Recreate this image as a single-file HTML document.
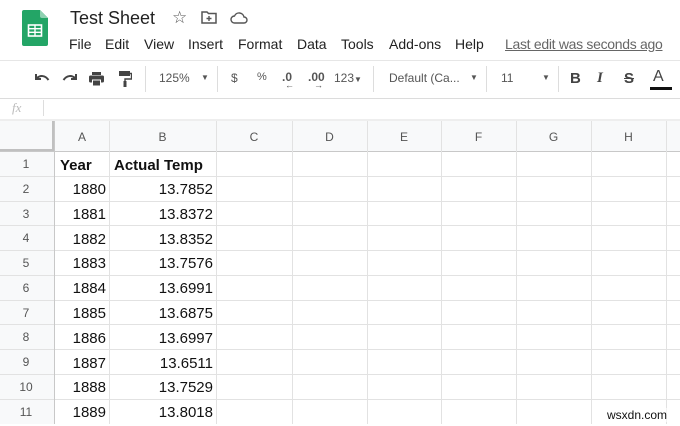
<!DOCTYPE html>
<html><head><style>
*{margin:0;padding:0;box-sizing:border-box}
body{width:680px;height:424px;overflow:hidden;background:#fff;font-family:"Liberation Sans",Arial,sans-serif;position:relative;color:#222}
.a{position:absolute;white-space:nowrap}
.m{position:absolute;top:36px;font-size:14px;color:#222}
.t{color:#555;font-size:12px}
.hl{position:absolute;left:0;width:680px;height:1px;background:#e2e2e2}
.vl{position:absolute;top:121px;height:303px;width:1px;background:#e2e2e2}
.ch{position:absolute;top:130px;font-size:12px;color:#555;text-align:center}
.rn{position:absolute;left:0;width:52px;text-align:center;font-size:12px;color:#555}
.c{position:absolute;font-size:15px;color:#111}
</style></head><body>
<svg class="a" style="left:22px;top:10px" width="26" height="36" viewBox="0 0 26 36"><path d="M2 0H18L26 8V34a2 2 0 0 1-2 2H2a2 2 0 0 1-2-2V2a2 2 0 0 1 2-2z" fill="#23a566"/><path d="M18 0L26 8H20a2 2 0 0 1-2-2z" fill="#8ed1b1"/><rect x="6.5" y="15" width="13" height="11" fill="none" stroke="#fff" stroke-width="1.6"/><path d="M6.5 18.7H19.5M6.5 22.3H19.5M13 15V26" stroke="#fff" stroke-width="1.4"/></svg>
<div class="a" style="left:70px;top:8px;font-size:18px;color:#222">Test Sheet</div>
<div class="a" style="left:172px;top:8px;font-size:17px;color:#555">☆</div>
<svg class="a" style="left:201px;top:11px" width="16" height="13" viewBox="0 0 16 13"><path d="M1 1H6L7.5 2.5H15V12H1Z" fill="none" stroke="#555" stroke-width="1.5"/><path d="M8 5V10M5.5 7.5H10.5" stroke="#555" stroke-width="1.4"/></svg>
<svg class="a" style="left:230px;top:12px" width="18" height="12" viewBox="0 0 18 12"><path d="M4.5 11H14a3 3 0 0 0 0-6 5 5 0 0 0-9.5-1A3.5 3.5 0 0 0 4.5 11Z" fill="none" stroke="#555" stroke-width="1.4"/></svg>
<div class="m" style="left:69px">File</div><div class="m" style="left:105px">Edit</div><div class="m" style="left:144px">View</div><div class="m" style="left:188px">Insert</div><div class="m" style="left:238px">Format</div><div class="m" style="left:297px">Data</div><div class="m" style="left:341px">Tools</div><div class="m" style="left:389px">Add-ons</div><div class="m" style="left:455px">Help</div>
<div class="a" style="left:505px;top:36px;font-size:14px;color:#666;text-decoration:underline;letter-spacing:-0.3px">Last edit was seconds ago</div>
<div class="hl" style="top:60px;background:#e6e6e6"></div>
<svg class="a" style="left:34px;top:73px" width="16" height="10" viewBox="0 0 16 10"><path d="M2 1V6H7" fill="none" stroke="#444" stroke-width="2"/><path d="M2.5 5.5C6 2 11 2 14.5 7" fill="none" stroke="#444" stroke-width="2"/></svg>
<svg class="a" style="left:62px;top:73px" width="16" height="10" viewBox="0 0 16 10"><path d="M14 1V6H9" fill="none" stroke="#444" stroke-width="2"/><path d="M13.5 5.5C10 2 5 2 1.5 7" fill="none" stroke="#444" stroke-width="2"/></svg>
<svg class="a" style="left:89px;top:72px" width="15" height="14" viewBox="0 0 15 14"><rect x="3" y="0" width="9" height="3" fill="#444"/><rect x="0" y="3.5" width="15" height="7" rx="1.5" fill="#444"/><rect x="3.5" y="8" width="8" height="6" fill="#444" stroke="#fff" stroke-width="1"/></svg>
<svg class="a" style="left:119px;top:71px" width="13" height="16" viewBox="0 0 13 16"><rect x="0" y="0" width="11" height="5" fill="#444"/><path d="M11 2.5H12.5V8H6V10" stroke="#444" stroke-width="1.4" fill="none"/><rect x="4.5" y="10" width="3" height="6" fill="#444"/></svg>
<div class="a" style="left:145px;top:66px;width:1px;height:26px;background:#ddd"></div>
<div class="a t" style="left:159px;top:71px">125%</div>
<div class="a t" style="left:201px;top:73px;font-size:8px">▼</div>
<div class="a" style="left:217px;top:66px;width:1px;height:26px;background:#ddd"></div>
<div class="a t" style="left:231px;top:71px">$</div>
<div class="a t" style="left:257px;top:71px;font-size:11px">%</div>
<div class="a t" style="left:282px;top:70px;font-weight:bold">.0<span style="position:absolute;left:3px;top:10px;font-size:9px">←</span></div>
<div class="a t" style="left:308px;top:70px;font-weight:bold">.00<span style="position:absolute;left:6px;top:10px;font-size:9px">→</span></div>
<div class="a t" style="left:334px;top:71px">123<span style="font-size:8px">▼</span></div>
<div class="a" style="left:373px;top:66px;width:1px;height:26px;background:#ddd"></div>
<div class="a t" style="left:389px;top:71px">Default (Ca...</div>
<div class="a t" style="left:470px;top:73px;font-size:8px">▼</div>
<div class="a" style="left:486px;top:66px;width:1px;height:26px;background:#ddd"></div>
<div class="a t" style="left:501px;top:71px">11</div>
<div class="a t" style="left:542px;top:73px;font-size:8px">▼</div>
<div class="a" style="left:558px;top:66px;width:1px;height:26px;background:#ddd"></div>
<div class="a" style="left:570px;top:70px;font-size:15px;font-weight:bold;color:#444">B</div>
<div class="a" style="left:597px;top:70px;font-size:15px;font-style:italic;font-weight:bold;color:#444;font-family:'Liberation Serif',serif">I</div>
<div class="a" style="left:624px;top:70px;font-size:15px;color:#444;text-decoration:line-through;font-weight:bold">S</div>
<div class="a" style="left:653px;top:68px;font-size:16px;color:#444">A</div>
<div class="a" style="left:650px;top:87px;width:22px;height:3px;background:#111"></div>
<div class="hl" style="top:98px;background:#dcdcdc"></div>
<div class="a" style="left:12px;top:100px;font-size:13px;color:#bbb;font-style:italic;font-family:'Liberation Serif',serif">fx</div>
<div class="a" style="left:43px;top:100px;width:1px;height:16px;background:#ddd"></div>
<div class="a" style="left:0;top:119px;width:680px;height:2px;background:#eee"></div>
<div class="a" style="left:0;top:121px;width:680px;height:30px;background:#f8f9fa"></div>
<div class="a" style="left:0;top:121px;width:54px;height:303px;background:#f8f9fa"></div>
<div class="a" style="left:52px;top:121px;width:3px;height:30px;background:#c0c0c0"></div>
<div class="a" style="left:0;top:149px;width:55px;height:3px;background:#c0c0c0"></div>
<div class="hl" style="top:151px;background:#c8c8c8"></div>
<div class="hl" style="top:176px"></div><div class="hl" style="top:201px"></div><div class="hl" style="top:225px"></div><div class="hl" style="top:250px"></div><div class="hl" style="top:275px"></div><div class="hl" style="top:300px"></div><div class="hl" style="top:324px"></div><div class="hl" style="top:349px"></div><div class="hl" style="top:374px"></div><div class="hl" style="top:399px"></div>
<div class="vl" style="left:54px;background:#c8c8c8"></div>
<div class="vl" style="left:109px"></div><div class="vl" style="left:216px"></div><div class="vl" style="left:292px"></div><div class="vl" style="left:367px"></div><div class="vl" style="left:441px"></div><div class="vl" style="left:516px"></div><div class="vl" style="left:591px"></div><div class="vl" style="left:666px"></div>
<div class="ch" style="left:55px;width:54px">A</div><div class="ch" style="left:109px;width:107px">B</div><div class="ch" style="left:216px;width:76px">C</div><div class="ch" style="left:292px;width:75px">D</div><div class="ch" style="left:367px;width:74px">E</div><div class="ch" style="left:441px;width:75px">F</div><div class="ch" style="left:516px;width:75px">G</div><div class="ch" style="left:591px;width:75px">H</div>
<div class="rn" style="top:157px">1</div><div class="rn" style="top:182px">2</div><div class="rn" style="top:207px">3</div><div class="rn" style="top:231px">4</div><div class="rn" style="top:256px">5</div><div class="rn" style="top:281px">6</div><div class="rn" style="top:306px">7</div><div class="rn" style="top:330px">8</div><div class="rn" style="top:355px">9</div><div class="rn" style="top:380px">10</div><div class="rn" style="top:405px">11</div>
<div class="c" style="left:60px;top:157px;font-weight:bold">Year</div>
<div class="c" style="left:114px;top:157px;font-weight:bold">Actual Temp</div>
<div class="c" style="left:55px;width:51px;text-align:right;top:178px;line-height:24.8px">1880<br>1881<br>1882<br>1883<br>1884<br>1885<br>1886<br>1887<br>1888<br>1889</div>
<div class="c" style="left:109px;width:104px;text-align:right;top:178px;line-height:24.8px">13.7852<br>13.8372<br>13.8352<br>13.7576<br>13.6991<br>13.6875<br>13.6997<br>13.6511<br>13.7529<br>13.8018</div>
<div class="a" style="left:607px;top:408px;font-size:12px;color:#111;background:rgba(255,255,255,.6)">wsxdn.com</div>
</body></html>
